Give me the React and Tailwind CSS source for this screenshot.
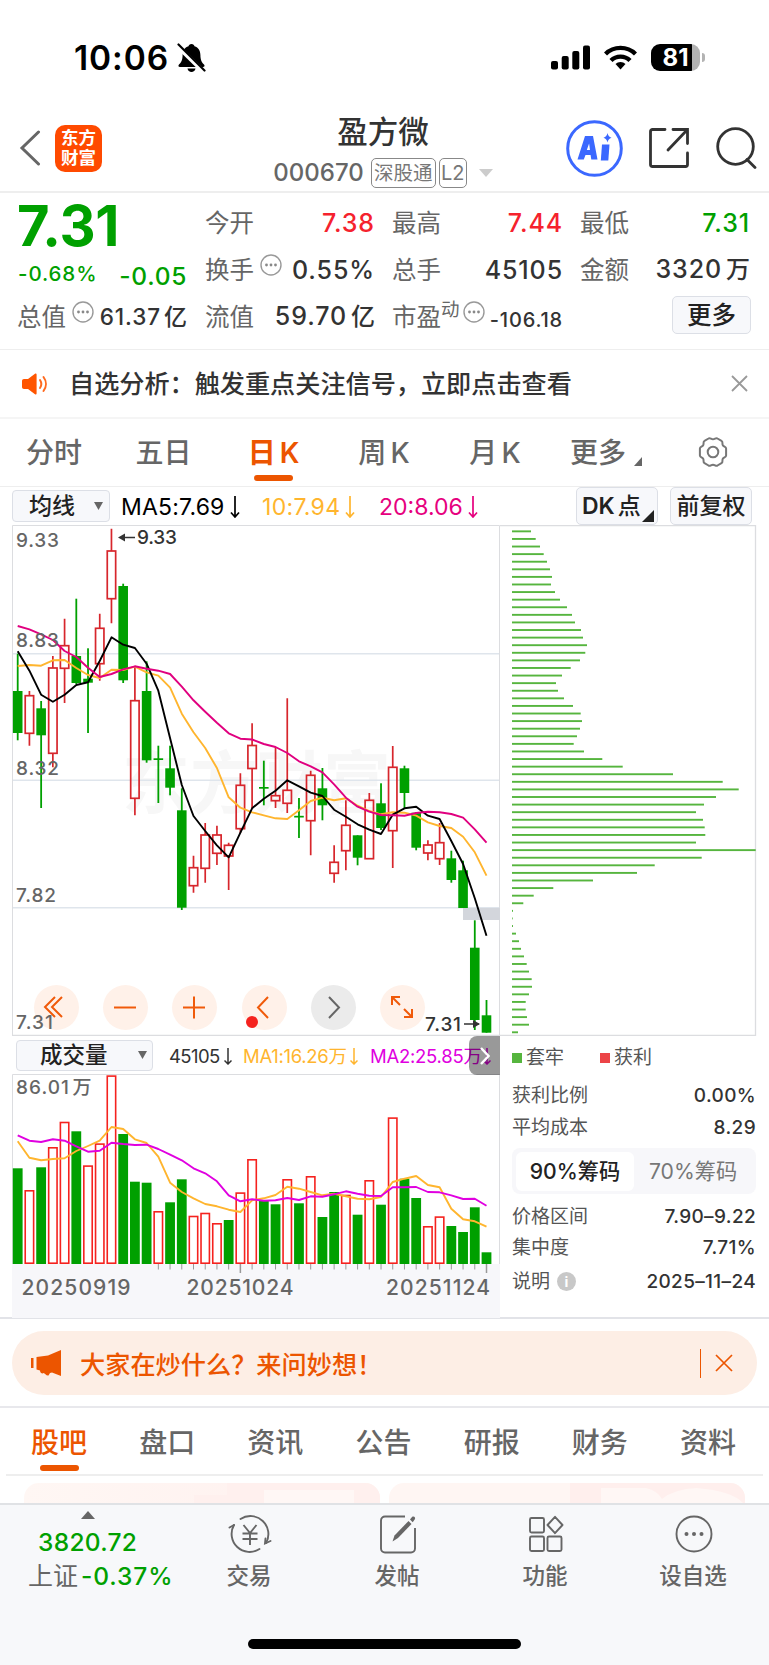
import clsx from 'clsx';

const STEP = 11.72;
const FIRST = 5.7;
const cx = (i) => FIRST + i * STEP;

// [direction, high, body top, body bottom, low]
const candles = [
  ['d', 128.7, 166, 208, 215.3], ['u', 166, 170.7, 208.3, 220.7], ['d', 176, 183.3, 210.3, 283],
  ['u', 131, 143, 228.3, 242.3], ['u', 93.7, 120.7, 143.3, 178], ['d', 73.7, 131, 158, 159],
  ['d', 123.3, 153.7, 157.7, 208], ['u', 88.7, 103.3, 138.7, 155.7], ['u', 3.7, 26, 73.7, 98.3],
  ['d', 58.7, 61, 155.3, 158], ['u', 142, 175.7, 273.3, 290.3], ['d', 136.3, 166, 235.3, 237.7],
  ['d', 220.7, 233.3, 235, 278], ['d', 220.7, 243.3, 262.7, 270.3], ['d', 263.3, 285.3, 382.7, 385],
  ['u', 330.7, 342.7, 360.7, 367.7], ['u', 298, 310, 343.3, 357.7], ['u', 300.7, 310, 328.3, 340],
  ['u', 317.7, 320.3, 331, 365], ['u', 248.3, 260.3, 303.7, 308], ['u', 198.3, 220.5, 243.5, 284],
  ['d', 235.7, 262, 263.7, 280.3], ['u', 222.3, 270.7, 275.7, 283], ['u', 173.3, 265.3, 278.3, 288],
  ['d', 273, 290.8, 292.5, 313], ['u', 245.7, 250.3, 295.7, 330.3], ['d', 243, 263.3, 280.3, 295.3],
  ['u', 320.3, 337.3, 348.3, 357.7], ['u', 275.3, 300.3, 325.7, 345.3], ['d', 310.3, 310.3, 332.7, 340.3],
  ['u', 268, 275.3, 333.7, 333.7], ['d', 258.3, 278.3, 303, 305], ['u', 221, 242.3, 305.7, 343],
  ['d', 240.7, 243.3, 268, 283.3], ['d', 287, 287.7, 322.7, 325.3], ['u', 315.3, 320, 328, 335.3],
  ['u', 298, 317.7, 333.7, 340], ['d', 325.7, 333.3, 355, 357.7], ['d', 335.7, 345.3, 383, 383],
  ['d', 395.3, 422.7, 495, 505], ['d', 475, 490.3, 507.7, 507.7],
];

const ma5 = [126.3, 145.7, 169.7, 176.7, 169.7, 160, 157.3, 136, 112.3, 119.7, 123, 138.7, 165.7, 213.3, 260, 291, 306, 320.3, 332.3, 307.7, 283.3, 273.7, 265.7, 255.3, 261.3, 267.7, 271, 284.7, 291.7, 299.3, 304.7, 309, 289.7, 283.3, 281.7, 290.7, 294, 316, 339, 373.3, 410.7];
const ma10 = [141, 140, 140.7, 135.3, 135, 143, 150, 153, 144.7, 145, 141.7, 147.3, 150.7, 162.7, 188.7, 207.3, 223, 243, 272.3, 282.7, 287.3, 290.3, 293.3, 294, 285.3, 276, 272.7, 275.3, 273.3, 280.7, 286, 289.3, 287.3, 287.7, 290.7, 297.3, 301, 303, 311.7, 327.3, 350.7];
const ma20 = [101, 104.3, 109.3, 115, 126, 132, 142.7, 152, 149, 144.3, 141.3, 143.7, 145.7, 149, 161.7, 175.3, 186.7, 197.7, 208.3, 213.7, 214.5, 219, 222, 228, 236.3, 241.3, 247.3, 259.3, 272.7, 281.7, 286.7, 290, 290.3, 290.7, 288, 286.7, 287.3, 289, 292.7, 304.3, 317.7];

const volumes = [
  'd95.7', 'u74', 'd96.7', 'u117', 'u142.3', 'd132.7', 'u98.7', 'u120.7', 'u188.7', 'd130', 'd82.3', 'd81.3', 'u53', 'd61.7',
  'd84.7', 'u48.3', 'u51.3', 'u41', 'd44', 'u71.7', 'u105', 'd64', 'd59.7', 'u85', 'd60.7', 'u88', 'd47', 'd72', 'u69.3',
  'd49.3', 'u84', 'd59.3', 'u146.7', 'd85.3', 'd66', 'u38', 'u47.7', 'd38', 'd32', 'd56.7', 'd11.7',
];
const volMa1 = [67.3, 83.7, 86.3, 85, 84.3, 77, 72, 66.7, 53, 55, 65.3, 69, 82.7, 108.7, 118, 124.3, 130, 132.3, 135.7, 138, 126.3, 124.3, 121, 112.7, 114.7, 118, 121.3, 119.7, 122.3, 124.7, 125.3, 123, 108, 104.7, 102, 111, 113.3, 134.7, 145.3, 147.3, 152.7];
const volMa2 = [61.3, 66.7, 68, 65.3, 66.7, 72.3, 77.7, 76.7, 68.7, 70, 71, 70.7, 75, 80.7, 86.3, 94.3, 99.3, 107.3, 121.3, 127.3, 125.3, 126.7, 126.3, 124, 126, 122.3, 122.7, 120.3, 117.3, 119.7, 121.7, 122, 113.3, 113.3, 113, 118, 118.3, 121.3, 125, 124.7, 131.7];

const chips = [19, 23.7, 28, 31.7, 35, 38, 40, 39, 43, 48, 55, 60, 63, 69, 71, 75, 73.3, 68, 58.7, 50, 44, 46, 52, 61, 68.7, 70, 68, 65, 61.7, 72, 90.3, 110.7, 161, 210.7, 226.7, 204, 192, 184, 191, 192.7, 193.3, 184, 243.7, 189.7, 142.7, 125, 81, 41.3, 21.7, 11.3, 1, 0.7, 1, 4, 7, 9, 12, 14.7, 17, 19.7, 20, 17, 13.7, 13.7, 15, 17, 6];

const line = (ys) => ys.map((y, i) => `${cx(i).toFixed(1)},${y}`).join(' ');

function StatusBar() {
  return (
    <div className="flex h-[100px] items-start justify-between pl-[74px] pr-[64px] pt-[41px]">
      <div className="flex items-center gap-[7px]">
        <span className="w-[96px] whitespace-nowrap text-[33.500px] font-semibold leading-[34px] tracking-[0.900px] text-black">10:06</span>
        <svg width="29" height="30" viewBox="0 0 29 30">
          <path d="M14.500 1c-1.800 0-2.800 1-3 2.300C7.500 4.500 5.600 8 5.600 12c0 5-1.500 7.500-3.600 9.500-1 1-.6 2.500 1 2.500h23c1.600 0 2-1.500 1-2.500-2.100-2-3.600-4.500-3.600-9.500 0-4-1.900-7.500-5.900-8.700C17.300 2 16.300 1 14.500 1zM10.500 25.500h8c-.3 2.200-2 3.500-4 3.500s-3.700-1.300-4-3.500z" fill="#000" />
          <path d="M0 2.500L27 29" stroke="#fff" strokeWidth="4.500" />
          <path d="M1.500 1.500L27.500 27.500" stroke="#000" strokeWidth="2.200" strokeLinecap="round" />
        </svg>
      </div>
      <div className="flex items-center gap-[14px] pt-[3px]">
        <svg width="39" height="25" viewBox="0 0 39 25">
          <rect x="0" y="16" width="7" height="8.500" rx="2" />
          <rect x="10.700" y="11" width="7" height="13.500" rx="2" />
          <rect x="21.300" y="6" width="7" height="18.500" rx="2" />
          <rect x="32" y="0.500" width="7" height="24" rx="2" />
        </svg>
        <svg width="33" height="25" viewBox="0 0 33 25" fill="none" stroke="#000" strokeWidth="4.400">
          <path d="M1.500 9a21.500 21.500 0 0 1 30 0" />
          <path d="M7 15.500a13.500 13.500 0 0 1 19 0" />
          <path d="M16.500 24.500l-5-5.500a7 7 0 0 1 10 0z" fill="#000" stroke="none" />
        </svg>
        <div className="flex items-center gap-[2px]">
          <div className="flex h-[27px] w-[49px] items-center justify-center rounded-[9px] bg-linear-to-r from-black from-83% to-[#b3b3b3] to-83% text-[24px] font-bold leading-[27px] text-white">
            81
          </div>
          <div className="h-[9px] w-[3px] rounded-r-full bg-[#b3b3b3]" />
        </div>
      </div>
    </div>
  );
}

function Header() {
  return (
    <div className="flex h-[93px] border-b-2 border-[#eeeeee] pl-[19px] pr-[12px]">
      <div className="flex w-[229px] items-center gap-[14px] pb-[3px] pt-[8px]">
        <svg width="22" height="36" viewBox="0 0 22 36" fill="none" stroke="#666" strokeWidth="3" strokeLinecap="round">
          <path d="M19.500 2L3 18l16.500 16" />
        </svg>
        <div className="flex h-[47px] w-[47px] flex-col items-center justify-center rounded-[10px] bg-[#ff4a00] text-[17.500px] font-bold leading-[20px] text-white">
          <span>东方</span>
          <span>财富</span>
        </div>
      </div>
      <div className="flex w-[270px] flex-col items-center pt-[15px]">
        <div className="text-[30.500px] font-medium leading-[34px] text-[#333]">盈方微</div>
        <div className="mt-[9px] flex items-center">
          <span className="text-[24px] font-medium leading-[30px] text-[#666]">000670</span>
          <span className="ml-[7px] h-[30px] w-[65px] rounded-[5px] border border-[#888] text-center text-[19.500px] leading-[28px] text-[#777]">深股通</span>
          <span className="ml-[3px] h-[30px] w-[28px] rounded-[5px] border border-[#888] text-center text-[20px] leading-[28px] text-[#777]">L2</span>
          <svg className="ml-[12px]" width="14" height="8" viewBox="0 0 14 8">
            <path d="M0 0h14L7 8z" fill="#ccc" />
          </svg>
        </div>
      </div>
      <div className="flex flex-1 items-center justify-end pt-[5px]">
        <svg width="57" height="57" viewBox="0 0 57 57">
          <circle cx="28.500" cy="28.500" r="26.800" fill="none" stroke="#3b68ff" strokeWidth="3" />
          <path d="M11.500 39.500L19 16h8l4.500 23.500h-6.200l-.7-4.500h-5.100l-1.700 4.500zM20.800 30h3.200l-.9-6.500z" fill="#3b68ff" fillRule="evenodd" />
          <path d="M36 24.500h7.500L42.300 40.500h-7.500z" fill="#3b68ff" />
          <path d="M41.500 13c.6 2.700 1.600 3.800 4 4.700-2.400.9-3.400 2-4 4.700-.6-2.700-1.600-3.800-4-4.700 2.400-.9 3.400-2 4-4.700z" fill="#3b68ff" />
        </svg>
        <svg className="ml-[25px]" width="42" height="42" viewBox="0 0 42 42" fill="none" stroke="#333" strokeWidth="2.800">
          <path d="M17 2.500H4.500a2 2 0 0 0-2 2v33a2 2 0 0 0 2 2h33a2 2 0 0 0 2-2V26" strokeLinecap="round" />
          <path d="M25 2.500h14.500v14M39.500 2.500L20 23" strokeLinecap="round" />
        </svg>
        <svg className="ml-[25px]" width="42" height="42" viewBox="0 0 42 42" fill="none" stroke="#333" strokeWidth="2.800" strokeLinecap="round">
          <circle cx="20.500" cy="19.500" r="17.800" />
          <path d="M32 32.500l8 8" />
        </svg>
      </div>
    </div>
  );
}

function Dots({ className }) {
  return (
    <svg className={className} width="22" height="22" viewBox="0 0 22 22">
      <circle cx="11" cy="11" r="10" fill="none" stroke="#999" strokeWidth="1.400" />
      <circle cx="6.500" cy="11" r="1.400" fill="#888" />
      <circle cx="11" cy="11" r="1.400" fill="#888" />
      <circle cx="15.500" cy="11" r="1.400" fill="#888" />
    </svg>
  );
}

function Stat({ label, value, unit, dots, color = 'text-[#333]' }) {
  return (
    <div className="flex h-[47px] items-center justify-between">
      <div className="flex items-center text-[#666]">
        <span>{label}</span>
        {dots && <Dots className="mb-[10px] ml-[6px]" />}
      </div>
      <span className={clsx('-mr-px text-[25px] font-medium tracking-[0.900px]', color)}>
        {value}
        {unit && <span className="ml-[4px] text-[24px] tracking-normal">{unit}</span>}
      </span>
    </div>
  );
}

function Quote() {
  return (
    <div className="flex h-[157px] gap-[18px] border-b border-[#eeeeee] pl-[17px] pr-[20px] pt-[6px] text-[24.500px] leading-[30px]">
      <div className="w-[170px]">
        <div className="flex h-[54px] items-center text-[56px] font-bold leading-[54px] tracking-[-0.300px] text-[#00a000]">7.31</div>
        <div className="flex h-[40px] items-center justify-between font-medium text-[#00a000]">
          <span className="mt-[2px] pl-[1px] text-[20.500px] tracking-[0.900px]">-0.68%</span>
          <span className="mt-[6px] tracking-[0.700px]">-0.05</span>
        </div>
        <div className="flex h-[47px] items-center text-[#666]">
          <span>总值</span>
          <Dots className="mb-[10px] ml-[6px]" />
          <span className="ml-auto text-[22.500px] font-medium tracking-[0.900px] text-[#333]">
            61.37<span className="ml-[3px] text-[23px] tracking-normal">亿</span>
          </span>
        </div>
      </div>
      <div className="w-[169px]">
        <Stat label="今开" value="7.38" color="text-[#f5222d]" />
        <Stat label="换手" value="0.55%" dots />
        <Stat label="流值" value="59.70" unit="亿" />
      </div>
      <div className="w-[170px]">
        <Stat label="最高" value="7.44" color="text-[#f5222d]" />
        <Stat label="总手" value="45105" />
        <div className="flex h-[47px] items-center text-[#666]">
          <span>市盈</span>
          <span className="mb-[16px] text-[18.500px]">动</span>
          <Dots className="mb-[10px] ml-[3px]" />
          <span className="-mr-px ml-auto mt-[6px] text-[20px] font-medium tracking-[0.800px] text-[#333]">-106.18</span>
        </div>
      </div>
      <div className="w-[169px]">
        <Stat label="最低" value="7.31" color="text-[#00a000]" />
        <Stat label="金额" value="3320" unit="万" />
        <div className="flex h-[47px] items-center justify-end">
          <button className="mr-[-2px] mt-[-3px] h-[38px] w-[79px] rounded-[5px] border border-[#dcdfe6] bg-[#f7f8fb] font-medium leading-[36px] text-[#222]">更多</button>
        </div>
      </div>
    </div>
  );
}

function Notice() {
  return (
    <div className="flex h-[69px] items-center border-b-2 border-[#f5f5f5] pl-[22px] pr-[21px]">
      <svg width="26" height="22" viewBox="0 0 26 22">
        <path d="M2 6h4l7-5.300c.9-.6 1.600-.2 1.600.8v19c0 1-.7 1.400-1.600.8L6 16H2c-1.200 0-2-.8-2-2V8c0-1.200.8-2 2-2z" fill="#ff5500" />
        <path d="M18 7c1.600 2.400 1.600 5.600 0 8M21.500 4c3.200 4.200 3.200 9.800 0 14" fill="none" stroke="#ff6a1f" strokeWidth="2" strokeLinecap="round" />
      </svg>
      <span className="ml-[21px] text-[25.150px] font-medium leading-[30px] text-[#333]">自选分析：触发重点关注信号，立即点击查看</span>
      <svg className="ml-auto" width="17" height="17" viewBox="0 0 17 17" stroke="#999" strokeWidth="1.800">
        <path d="M1 1l15 15M16 1L1 16" />
      </svg>
    </div>
  );
}

const periods = [
  { label: '分时', w: 'w-[110px]' },
  { label: '五日', w: 'w-[109px]' },
  { label: '日', k: true, w: 'w-[111px]', active: true },
  { label: '周', k: true, w: 'w-[110px]' },
  { label: '月', k: true, w: 'w-[112px]' },
];

function PeriodTabs() {
  return (
    <div className="ml-[-1px] flex h-[68px] border-b border-[#eeeeee] text-[28px] leading-[34px] text-[#666]">
      {periods.map((p) => (
        <div key={p.label} className={clsx('flex flex-col items-center pt-[17px]', p.w, p.active && 'font-semibold text-[#ec5500]')}>
          <span className={clsx(!p.active && 'font-medium')}>
            {p.label}
            {p.k && <span className="ml-[4px]">K</span>}
          </span>
          {p.active && <span className="mt-[5px] h-[6px] w-[39px] rounded-full bg-[#ec5500]" />}
        </div>
      ))}
      <div className="flex w-[110px] pl-[19px] pt-[17px] font-medium">
        更多
        <svg className="ml-[8px] mt-[21px]" width="8" height="9" viewBox="0 0 8 9">
          <path d="M8 0v9H0z" fill="#666" />
        </svg>
      </div>
      <svg className="ml-[35px] mt-[17px]" width="34" height="32" viewBox="0 0 34 32" fill="none" stroke="#777" strokeWidth="2">
        <path d="M12.500 2.500c1.500-1.300 2.500.8 4.500.8s3-2.100 4.500-.8l4 2.300c1.800.9.300 2.700 1.300 4.400s3.300 1.400 3.300 3.400v6.800c0 2-2.300 1.700-3.300 3.400s.5 3.500-1.300 4.400l-4 2.300c-1.500 1.300-2.500-.8-4.500-.8s-3 2.100-4.500.8l-4-2.300c-1.800-.9-.3-2.700-1.300-4.400s-3.300-1.400-3.300-3.400v-6.800c0-2 2.300-1.700 3.300-3.400s-.5-3.500 1.300-4.400z" />
        <circle cx="17" cy="16" r="5.300" />
      </svg>
    </div>
  );
}

function DownArrow({ className }) {
  return (
    <svg className={clsx('shrink-0', className)} width="10" height="22" viewBox="0 0 10 22" fill="none" stroke="currentColor" strokeWidth="1.700">
      <path d="M5 0v21M1 16.500l4 4.500 4-4.500" />
    </svg>
  );
}

function SmallArrow({ className }) {
  return (
    <svg className={clsx('shrink-0', className)} width="8" height="17" viewBox="0 0 8 17" fill="none" stroke="currentColor" strokeWidth="1.500">
      <path d="M4 0v16M0.500 12.500l3.500 3.500 3.500-3.500" />
    </svg>
  );
}

function MaRow() {
  return (
    <div className="flex h-[38px] items-center pl-[12px] pr-[17px] text-[23px]">
      <div className="flex h-[32px] w-[98px] items-center rounded-[4px] border border-[#dcdfe6] bg-[#f7f8fb] pl-[16px] font-medium text-[#222]">
        <span className="leading-[30px]">均线</span>
        <svg className="ml-[19px]" width="9" height="8" viewBox="0 0 9 8">
          <path d="M0 0h9L4.500 8z" fill="#666" />
        </svg>
      </div>
      <div className="flex w-[141px] items-center whitespace-nowrap pl-[11px] pt-[2px] leading-[30px] tracking-[0.200px] text-black">
        MA5:7.69
        <DownArrow className="ml-[5px]" />
      </div>
      <div className="flex w-[118px] items-center whitespace-nowrap pl-[11px] pt-[2px] leading-[30px] tracking-[0.300px] text-[#ffb52e]">
        10:7.94
        <DownArrow className="ml-[5px]" />
      </div>
      <div className="flex items-center whitespace-nowrap pl-[10px] pt-[2px] leading-[30px] text-[#e6007e]">
        20:8.06
        <DownArrow className="ml-[5px]" />
      </div>
      <div className="ml-auto flex h-[38px] w-[82px] items-center rounded-[5px] border border-[#dcdfe6] bg-[#f7f8fb] pl-[5px] font-semibold text-[#222]">
        <span className="whitespace-nowrap leading-[30px]">DK<span className="ml-[3px] font-medium">点</span></span>
        <svg className="ml-[1px] mt-[19px] shrink-0" width="12" height="12" viewBox="0 0 12 12">
          <path d="M12 0v12H0z" fill="#222" />
        </svg>
      </div>
      <div className="ml-[12px] h-[38px] w-[82px] rounded-[5px] border border-[#dcdfe6] bg-[#f7f8fb] text-center font-medium leading-[37px] text-[#222]">前复权</div>
    </div>
  );
}

const controls = [
  { id: 'rewind', path: 'M21 12L11 22l10 10M28 12L18 22l10 10' },
  { id: 'minus', path: 'M11 22.500h22' },
  { id: 'plus', path: 'M11 22.500h22M22 11.500v22' },
  { id: 'prev', path: 'M26 12L16 22.500 26 33' },
  { id: 'next', path: 'M18 12l10 10.500L18 33', gray: true },
  { id: 'expand', path: 'M12 20v-8h8M12 12l8 8M32 24v8h-8M32 32l-8-8' },
];

function PriceChart() {
  return (
    <div className="relative h-[511px] w-[488px]">
      <svg width="488" height="511" viewBox="0 0 488 511">
        <g fill="#f7f7f7" fontSize="68" fontWeight="700">
          <text x="110" y="283">东方</text>
          <text x="243" y="283">财富</text>
        </g>
        <g stroke="#dfe5ec" strokeWidth="1.500">
          <path d="M0 128.700h488M0 255.300h488M0 382.700h488" />
        </g>
        <path d="M0.500 511V0.500h487V511" fill="none" stroke="#dcdde0" />
        <path d="M0 510.500h489" stroke="#dcdde0" strokeWidth="1.500" />
        <rect x="451" y="383" width="37" height="12" fill="#d3d6dc" />
        {candles.map(([dir, hi, top, bot, lo], i) => {
          const x = cx(i);
          if (dir === 'd') {
            return (
              <g key={i} fill="#00a000">
                <rect x={x - 0.9} y={hi} width="1.8" height={lo - hi} />
                <rect x={x - 4.8} y={top} width="9.6" height={bot - top} />
              </g>
            );
          }
          return (
            <g key={i} fill="none" stroke="#d7262c" strokeWidth="1.700">
              <path d={`M${x} ${hi}V${top}M${x} ${bot}V${lo}`} />
              <rect x={x - 4.2} y={top} width="8.4" height={bot - top} />
            </g>
          );
        })}
        <g fill="none" strokeWidth="1.900" strokeLinejoin="round">
          <polyline points={line(ma10)} stroke="#ffb52e" />
          <polyline points={line(ma5)} stroke="#000" />
          <polyline points={line(ma20)} stroke="#e0007f" />
        </g>
        <g fill="#333" fontSize="19" fontWeight="500">
          <text x="125" y="19.300" textLength="40">9.33</text>
          <text x="413" y="505.700" textLength="36">7.31</text>
          <path d="M112 12.500h11M467 499h-15" stroke="#333" strokeWidth="1.700" />
          <path d="M106 12.500l7-4v8zM468 499l-7-4v8z" />
        </g>
      </svg>
      <div className="absolute bottom-[6px] left-[21.500px] flex gap-[24.400px]">
        {controls.map((c) => (
          <div key={c.id} className={clsx('relative h-[45px] w-[45px] rounded-full', c.gray ? 'bg-[#ebebeb]' : 'bg-[#fff1e9]')}>
            <svg width="45" height="45" viewBox="0 0 45 45" fill="none" stroke={c.gray ? '#666' : '#f05a0a'} strokeWidth="2">
              <path d={c.path} />
            </svg>
            {c.id === 'prev' && <span className="absolute bottom-[2px] left-[4px] h-[12px] w-[12px] rounded-full bg-[#f5221e]" />}
          </div>
        ))}
      </div>
      <svg className="absolute left-0 top-0" width="488" height="511" viewBox="0 0 488 511">
        <g fill="#666" fontSize="19" fontWeight="500">
          <text x="4" y="21.700" textLength="43">9.33</text>
          <text x="4" y="122.300" textLength="43">8.83</text>
          <text x="4" y="249.700" textLength="43">8.32</text>
          <text x="4" y="376.700" textLength="40">7.82</text>
          <text x="4" y="504.300" textLength="37">7.31</text>
        </g>
      </svg>
    </div>
  );
}

function ChipChart() {
  return (
    <svg width="257" height="511" viewBox="0 0 257 511">
      <path d="M0 0.500h255.500v510H0" fill="none" stroke="#dcdde0" strokeWidth="1.300" />
      {chips.map((w, i) => (
        <rect key={i} x="12" y={5.4 + i * 7.59} width={w} height="1.9" fill="#56b53e" />
      ))}
    </svg>
  );
}

function VolumeRow() {
  return (
    <div className="relative flex h-[38px] items-center pl-[4px] text-[18.500px] leading-[24px]">
      <div className="flex h-[31px] w-[137px] shrink-0 items-center rounded-[4px] border border-[#dcdfe6] bg-[#f7f8fb] pl-[23px] text-[22.500px] font-medium text-[#222]">
        <span>成交量</span>
        <svg className="ml-[30px]" width="9" height="8" viewBox="0 0 9 8">
          <path d="M0 0h9L4.500 8z" fill="#666" />
        </svg>
      </div>
      <div className="flex w-[75px] shrink-0 items-center pl-[16px] pt-[2px] tracking-[-0.600px] text-[#333]">
        <span className="w-[51px]">45105</span>
        <SmallArrow className="ml-[4px]" />
      </div>
      <div className="flex w-[127px] shrink-0 items-center whitespace-nowrap pl-[15px] pt-[2px] tracking-[-0.300px] text-[#ffb52e]">
        <span className="w-[103px]">MA1:16.26万</span>
        <SmallArrow className="ml-[4px]" />
      </div>
      <div className="flex shrink-0 items-center whitespace-nowrap pl-[15px] pt-[2px] tracking-[-0.250px] text-[#e000e0]">
        <span className="w-[110px]">MA2:25.85万</span>
        <SmallArrow className="ml-[3px]" />
      </div>
      <div className="absolute right-0 top-0 flex h-[39px] w-[31px] items-center justify-center rounded-l-[8px] bg-black/40">
        <svg width="10" height="18" viewBox="0 0 10 18" fill="none" stroke="#fff" strokeWidth="2.400">
          <path d="M1 1l7.500 8L1 17" />
        </svg>
      </div>
    </div>
  );
}

function VolumeChart() {
  return (
    <svg width="488" height="244" viewBox="0 0 488 244">
      <path d="M0.500 190V0.500h487V190" fill="none" stroke="#dcdde0" />
      <rect x="0" y="190" width="488" height="54" fill="#f7f7fa" />
      {volumes.map((v, i) => {
        const h = Number(v.slice(1));
        const x = cx(i);
        return v[0] === 'd' ? (
          <rect key={i} x={x - 4.9} y={190 - h} width="9.8" height={h} fill="#00a000" />
        ) : (
          <rect key={i} x={x - 4.2} y={190.8 - h} width="8.4" height={h - 1.6} fill="#fff" stroke="#f5221e" strokeWidth="1.600" />
        );
      })}
      <g fill="none" strokeWidth="1.900" strokeLinejoin="round">
        <polyline points={line(volMa1)} stroke="#ffb52e" />
        <polyline points={line(volMa2)} stroke="#e000e0" />
      </g>
      {volumes.map((v, i) => {
        if (i < 12) return null;
        const major = i === 19 || i === 40;
        return <path key={i} d={`M${cx(i)} 190v${major ? 9 : 5.5}`} stroke="#999" strokeWidth={major ? 1.5 : 1} />;
      })}
      <g fontSize="19" fontWeight="500" fill="#666">
        <text x="4" y="20" textLength="53">86.01</text>
        <text x="60.500" y="20">万</text>
      </g>
      <g fontSize="21" fontWeight="500" fill="#666">
        <text x="9.500" y="221" textLength="109">20250919</text>
        <text x="174.500" y="221" textLength="107">20251024</text>
        <text x="374" y="221" textLength="104">20251124</text>
      </g>
    </svg>
  );
}

function Row({ label, value, className, info }) {
  return (
    <div className={clsx('flex items-center justify-between', className)}>
      <span className="flex items-center text-[#555]">
        {label}
        {info && <span className="ml-[7px] h-[19px] w-[19px] rounded-full bg-[#c8c8c8] text-center text-[14px] font-bold leading-[19px] text-white">i</span>}
      </span>
      <span className="font-medium tracking-[0.350px] text-[#333]">{value}</span>
    </div>
  );
}

function ChipInfo() {
  return (
    <div className="w-[244px] text-[19px] leading-[26px]">
      <div className="flex h-[43px] items-center pt-[1px] text-[#555]">
        <span className="h-[10px] w-[10px] bg-[#56b53e]" />
        <span className="ml-[4px]">套牢</span>
        <span className="ml-[36px] h-[10px] w-[10px] bg-[#ec4447]" />
        <span className="ml-[4px]">获利</span>
      </div>
      <Row className="h-[33px]" label="获利比例" value="0.00%" />
      <Row className="h-[31px]" label="平均成本" value="8.29" />
      <div className="mt-[5px] flex h-[46px] items-center rounded-[8px] bg-[#f7f7fa] px-[4px] text-[21.200px]">
        <div className="h-[39px] w-[118px] rounded-[6px] bg-white text-center font-medium leading-[39px] text-[#222]">90%筹码</div>
        <div className="flex-1 text-center leading-[39px] text-[#777]">70%筹码</div>
      </div>
      <Row className="mt-[7px] h-[31px]" label="价格区间" value="7.90–9.22" />
      <Row className="h-[32px]" label="集中度" value="7.71%" />
      <Row className="h-[35px]" label="说明" value="2025–11–24" info />
    </div>
  );
}

function Charts() {
  return (
    <div className="h-[794px] border-b-2 border-[#e2e3e8] pl-[12px]">
      <div className="flex">
        <PriceChart />
        <ChipChart />
      </div>
      <div className="flex">
        <div className="w-[488px]">
          <VolumeRow />
          <VolumeChart />
        </div>
        <div className="pl-[12px]">
          <ChipInfo />
        </div>
      </div>
    </div>
  );
}

function Banner() {
  return (
    <div className="h-[89px] border-b-2 border-[#e8e8ec] px-[12px] pt-[12px]">
      <div className="flex h-[64px] items-center rounded-[32px] bg-[#fdeee5] pl-[19px] pr-[24px] text-[#ec5500]">
        <svg width="30" height="27" viewBox="0 0 30 27" fill="#ec5500">
          <rect x="0" y="8" width="2.500" height="10" />
          <path d="M5.500 7L17 5.500 30 0v26l-9-3.500-2 .5-1.500 2.500c-2.500.5-3.500-2.500-5-2.500-1 1-3.500 0-3.500-2.500l-3.500-1z" />
        </svg>
        <span className="ml-[19px] mt-[3px] text-[25.200px] font-medium leading-[32px]">大家在炒什么？来问妙想！</span>
        <span className="ml-auto h-[29px] w-[1.500px] bg-[#ec5500]" />
        <svg className="ml-[14px]" width="18" height="18" viewBox="0 0 18 18" stroke="#ec5500" strokeWidth="1.700">
          <path d="M1 1l16 16M17 1L1 17" />
        </svg>
      </div>
    </div>
  );
}

const sections = ['股吧', '盘口', '资讯', '公告', '研报', '财务', '资料'];

function SectionTabs() {
  return (
    <div className="mx-[6px] flex h-[68px] justify-between border-b-2 border-[#eeeeee] pl-[25px] pr-[27px] text-[28px] leading-[36px] text-[#666]">
      {sections.map((s, i) => (
        <div key={s} className={clsx('flex flex-col items-center pt-[17px] font-medium', i === 0 && 'text-[#ec5500]')}>
          <span>{s}</span>
          {i === 0 && <span className="mt-[4px] h-[6px] w-[39px] rounded-full bg-[#ec5500]" />}
        </div>
      ))}
    </div>
  );
}

function Cards() {
  return (
    <div className="flex h-[27px] gap-[9px] pl-[24px] pt-[7px]">
      <div className="h-[20px] w-[356px] overflow-hidden rounded-t-[15px] bg-linear-to-r from-[#fff7f4] to-[#fff0ee]">
        <svg width="356" height="20" viewBox="0 0 356 20">
          <path d="M170 12h33V0H356V20H170z" fill="#fff0ee" />
          <path d="M240 7h90v13h-90z" fill="#fff7f5" />
        </svg>
      </div>
      <div className="h-[20px] w-[356px] overflow-hidden rounded-t-[15px] bg-[#fff6f3]">
        <svg width="356" height="20" viewBox="0 0 356 20">
          <path d="M181 0h175v20H181z" fill="#ffefed" />
          <path d="M212 5h45q12 3 16 11 12-10 35-11 35 3 46 15H212z" fill="#fff7f5" />
        </svg>
      </div>
    </div>
  );
}

const icon = { width: 44, height: 40, viewBox: '0 0 44 40', fill: 'none', stroke: '#666', strokeWidth: 1.9 };

const actions = [
  {
    label: '交易',
    icon: (
      <svg {...icon}>
        <path d="M12.500 5A18 18 0 0 1 38 29M31.500 35A18 18 0 0 1 6 11" strokeLinecap="round" />
        <path d="M1.500 13.500l4.500-2.500M42.500 27l-5.500 2.500.5-5" strokeLinecap="round" />
        <path d="M15.500 11l6.500 8 6.500-8M22 19v12M14.500 19.500h15M14.500 25h15" />
      </svg>
    ),
  },
  {
    label: '发帖',
    icon: (
      <svg {...icon}>
        <path d="M29 2.500H9A4 4 0 0 0 5 6.500v28a4 4 0 0 0 4 4h26a4 4 0 0 0 4-4V14" />
        <path d="M16.500 27.500l2-6L32.500 7l3 3-13.500 14z" fill="#666" stroke="none" />
        <path d="M34 5.500l2-2.500c2-1.300 4 .7 2.700 2.500l-2 2.700z" fill="#666" stroke="none" />
      </svg>
    ),
  },
  {
    label: '功能',
    icon: (
      <svg {...icon}>
        <rect x="6" y="4" width="14" height="14.500" rx="1.500" />
        <rect x="6" y="22.500" width="14" height="14.500" rx="1.500" />
        <rect x="23.500" y="22.500" width="14" height="14.500" rx="1.500" />
        <path d="M31 2.800l7.500 8.200-7.500 8.200-7.500-8.200z" strokeLinejoin="round" />
      </svg>
    ),
  },
  {
    label: '设自选',
    icon: (
      <svg {...icon}>
        <circle cx="22" cy="20" r="17.500" />
        <g fill="#666" stroke="none">
          <circle cx="14.500" cy="20" r="2" />
          <circle cx="22" cy="20" r="2" />
          <circle cx="29.500" cy="20" r="2" />
        </g>
      </svg>
    ),
  },
];

function BottomBar() {
  return (
    <div className="h-[162px] border-t-2 border-[#e0e2e5] bg-[#f7f8fa]">
      <div className="flex h-[134px]">
        <div className="w-[176px] pt-[6px] text-[24.500px] font-medium leading-[30px] text-[#00a000]">
          <svg className="ml-[81px]" width="14" height="8" viewBox="0 0 14 8">
            <path d="M7 0l7 8H0z" fill="#666" />
          </svg>
          <div className="mt-[8px] pl-[38px] tracking-[0.300px]">3820.72</div>
          <div className="mt-[4px] flex whitespace-nowrap pl-[28px]">
            <span className="text-[25px] font-normal text-[#666]">上证</span>
            <span className="ml-[3px] tracking-[0.900px]">-0.37%</span>
          </div>
        </div>
        {actions.map((a) => (
          <div key={a.label} className="flex w-[148px] flex-col items-center pt-[9px]">
            {a.icon}
            <span className="mt-[7px] pr-[2px] text-[22.500px] font-medium leading-[30px] text-[#666]">{a.label}</span>
          </div>
        ))}
      </div>
      <div className="mx-auto h-[10px] w-[273px] rounded-full bg-black" />
    </div>
  );
}

export default function App() {
  return (
    <div className="h-[1665px] w-[769px] overflow-hidden bg-white font-[Inter,'Noto_Sans_CJK_SC',sans-serif]">
      <StatusBar />
      <Header />
      <Quote />
      <Notice />
      <PeriodTabs />
      <MaRow />
      <Charts />
      <Banner />
      <SectionTabs />
      <Cards />
      <BottomBar />
    </div>
  );
}
